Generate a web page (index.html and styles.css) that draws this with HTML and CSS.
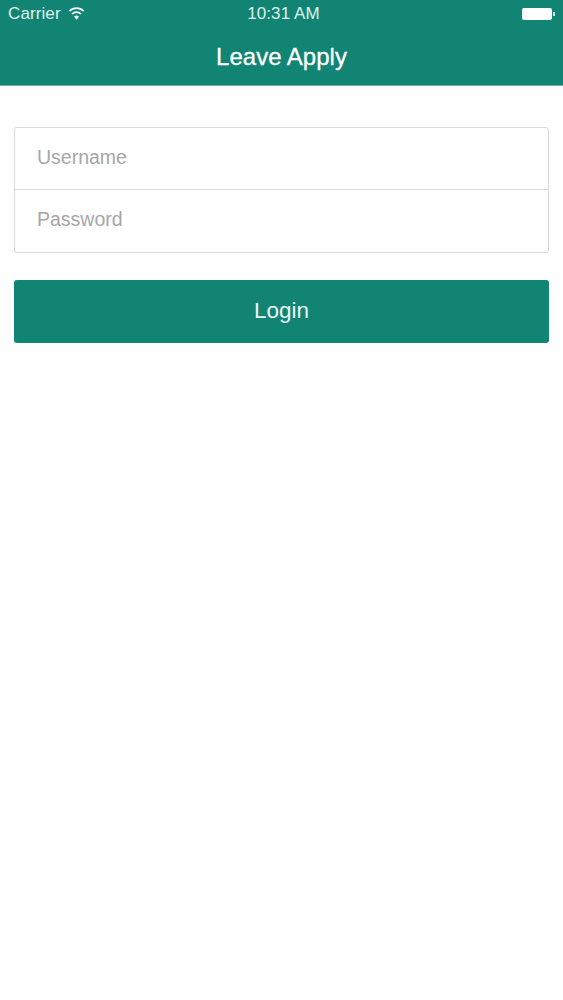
FILE: index.html
```html
<!DOCTYPE html>
<html lang="en">
<head>
    <meta charset="UTF-8">
    <meta name="viewport" content="width=device-width, initial-scale=1.0">
    <title>Leave Apply</title>
    <link rel="stylesheet" href="styles.css">
</head>
<body>
    <header class="app-header">
        <div class="status-bar">
            <div class="status-left">
                <span>Carrier</span>
                <svg class="wifi-icon" width="17" height="13" viewBox="0 0 17 13">
                    <path d="M1.300 4.100A10.200 10.200 0 0 1 15.700 4.100" fill="none" stroke="#eef8f6" stroke-width="1.700"/>
                    <path d="M4 7A6.400 6.400 0 0 1 13 7" fill="none" stroke="#eef8f6" stroke-width="1.700"/>
                    <path d="M8.500 12.800L6 9.700A3.600 3.600 0 0 1 11 9.700z" fill="#eef8f6"/>
                </svg>
            </div>
            <span class="status-time">10:31 AM</span>
            <div class="battery">
                <div class="battery-body"></div>
                <div class="battery-tip"></div>
            </div>
        </div>
        <h1 class="app-title">Leave Apply</h1>
    </header>

    <main class="login-page">
        <form class="login-form">
            <div class="input-list">
                <input type="text" class="list-input" placeholder="Username">
                <input type="password" class="list-input" placeholder="Password">
            </div>
            <button type="button" class="login-btn">Login</button>
        </form>
    </main>
</body>
</html>
```

FILE: styles.css
```css
body {
    font-family: "Liberation Sans", Arial, sans-serif;
    margin: 0;
    background-color: #fefefe;
    min-height: 1000px;
}

.app-header {
    background-color: #128474;
    height: 85px;
    border-bottom: 1px solid #6fb3a8;
    color: white;
}

.status-bar {
    display: flex;
    justify-content: space-between;
    align-items: center;
    height: 28px;
    padding: 0 8px;
    position: relative;
    font-size: 17px;
    letter-spacing: 0.1px;
    color: #dff1ed;
}

.status-left {
    display: flex;
    align-items: center;
    gap: 7px;
}

.wifi-icon {
    margin-top: -2px;
}

.status-time {
    position: absolute;
    left: 4px;
    right: 0;
    text-align: center;
}

.battery {
    display: flex;
    align-items: center;
}

.battery-body {
    width: 30px;
    height: 12px;
    background-color: white;
    border-radius: 2px;
}

.battery-tip {
    width: 2px;
    height: 4px;
    margin-left: 1px;
    background-color: #cfe7e2;
}

.app-title {
    margin: 0;
    padding-top: 1px;
    font-size: 24px;
    font-weight: normal;
    line-height: 56px;
    text-align: center;
    -webkit-text-stroke: 0.3px white;
}

.login-page {
    padding: 41px 14px 0;
}

.input-list {
    border: 1px solid #dadada;
    border-radius: 3px;
    background-color: white;
}

.list-input {
    display: block;
    width: 100%;
    height: 61px;
    padding: 0 22px 3px;
    border: none;
    box-sizing: border-box;
    background: transparent;
    font-family: inherit;
    font-size: 19.500px;
}

.list-input + .list-input {
    height: 63px;
    border-top: 1px solid #dadada;
}

.list-input::placeholder {
    color: #a6a6a8;
}

.login-btn {
    display: block;
    width: 100%;
    height: 63px;
    margin-top: 27px;
    padding: 0 0 2px;
    border: none;
    border-radius: 3px;
    background-color: #128474;
    color: #e8f6f3;
    font-family: inherit;
    font-size: 22.500px;
}
```
